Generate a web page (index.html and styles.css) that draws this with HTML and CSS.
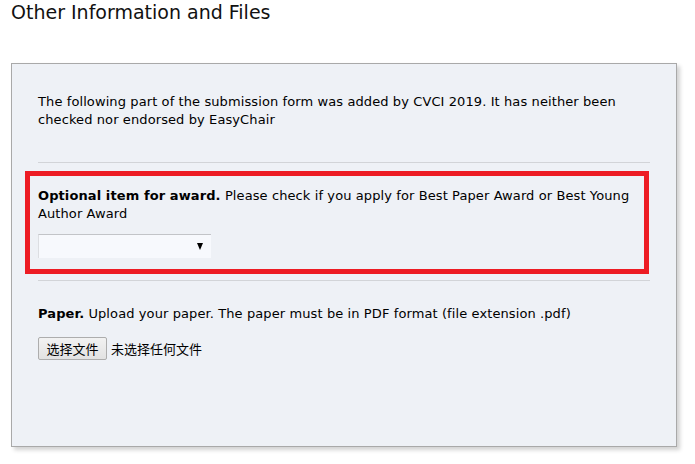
FILE: index.html
```html
<!DOCTYPE html>
<html lang="en">
<head>
<meta charset="utf-8">
<title>Other Information and Files</title>
<link rel="stylesheet" href="styles.css">
</head>
<body>
<h2 class="title">Other Information and Files</h2>
<div class="panel">
  <div class="intro">
    <p class="text">The following part of the submission form was added by CVCI 2019. It has neither been checked nor endorsed by EasyChair</p>
  </div>
  <div class="field field-award">
    <p class="text"><b>Optional item for award.</b> Please check if you apply for Best Paper Award or Best Young Author Award</p>
    <div class="select-wrap">
      <select class="select"><option></option></select>
      <svg class="select-arrow" width="6" height="7" viewBox="0 0 6 7"><polygon points="0,0 6,0 3,7" fill="#000"/></svg>
    </div>
    <div class="highlight"></div>
  </div>
  <div class="field field-paper">
    <p class="text"><b>Paper.</b> Upload your paper. The paper must be in PDF format (file extension .pdf)</p>
    <div class="file-row">
      <button class="file-btn" type="button">选择文件</button>
      <span class="file-status">未选择任何文件</span>
    </div>
  </div>
</div>
</body>
</html>
```

FILE: styles.css
```css
html, body {
  margin: 0;
  padding: 0;
  background: #ffffff;
}

body {
  font-family: "DejaVu Sans", Verdana, "Noto Sans CJK SC", sans-serif;
  color: #000;
  width: 695px;
  height: 464px;
  overflow: hidden;
}

.title {
  margin: 0 0 39px 11px;
  font-size: 19px;
  line-height: 24px;
  font-weight: normal;
  color: #111;
}

.panel {
  margin-left: 11px;
  width: 612px;
  height: 382px;
  padding: 0 26px;
  background: #eef1f6;
  border: 1px solid #a9a9a9;
  box-shadow: 3px 3px 4px rgba(0, 0, 0, 0.18);
}

.text {
  margin: 0;
  font-size: 13px;
  line-height: 17.5px;
  letter-spacing: 0.1px;
}

.text b {
  font-weight: bold;
}

.intro {
  padding: 29px 0 34px;
  border-bottom: 1px solid #d2d4d8;
}

.field {
  position: relative;
  padding: 24px 0 22px;
  border-bottom: 1px solid #d2d4d8;
}

.field-paper {
  border-bottom: none;
}

.select-wrap {
  position: relative;
  width: 173px;
  height: 24px;
  margin-top: 12px;
}

.select {
  appearance: none;
  -webkit-appearance: none;
  display: block;
  width: 173px;
  height: 24px;
  margin: 0;
  padding: 0 4px;
  background: #f7f9fd;
  border: none;
  border-top: 1px solid #c2c4c8;
  border-left: 1px solid #dcdee2;
  border-radius: 0;
  font-size: 13px;
}

.select-arrow {
  position: absolute;
  right: 8px;
  top: 9px;
}

.highlight {
  position: absolute;
  left: -13px;
  top: 8px;
  right: 1px;
  bottom: 6px;
  border: 5px solid #ed1c24;
  pointer-events: none;
}

.file-row {
  display: flex;
  align-items: center;
  gap: 4px;
  margin-top: 14px;
}

.file-btn {
  width: 69px;
  height: 23px;
  margin: 0;
  padding: 0;
  font-family: "Noto Sans CJK SC", sans-serif;
  font-size: 13px;
  line-height: 21px;
  color: #000;
  background: linear-gradient(#f2f2f2, #e2e2e2);
  border: 1px solid #adadad;
  border-radius: 2px;
}

.file-status {
  font-family: "Noto Sans CJK SC", sans-serif;
  font-size: 13px;
  line-height: 23px;
}
```
